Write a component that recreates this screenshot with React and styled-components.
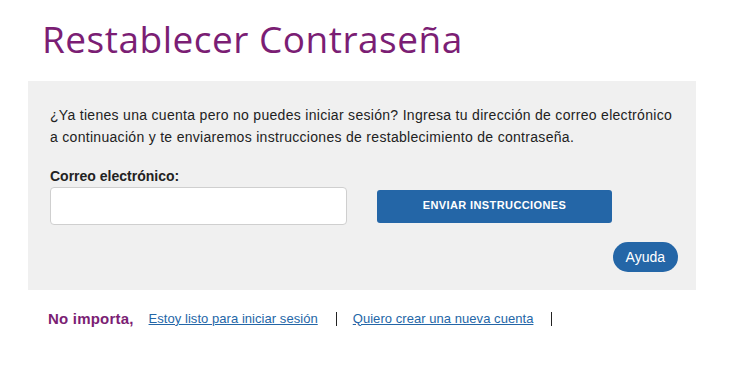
import React from 'react';
import styled, { createGlobalStyle } from 'styled-components';

const colors = {
  purple: '#7b1e74',
  blue: '#2466a7',
  panel: '#f0f0f0',
  text: '#222222',
};

const GlobalStyle = createGlobalStyle`
  body {
    margin: 0;
    background: #ffffff;
    font-family: 'Liberation Sans', Arial, sans-serif;
  }
`;

const Page = styled.div`
  width: 735px;
  padding: 13px 0 0 28px;
  box-sizing: border-box;
`;

const Title = styled.h1`
  margin: 0 0 16px 14px;
  font-family: 'Open Sans', 'Liberation Sans', sans-serif;
  font-weight: 400;
  font-size: 37px;
  line-height: 52px;
  letter-spacing: 0.5px;
  color: ${colors.purple};
`;

const Panel = styled.div`
  width: 668px;
  background: ${colors.panel};
  padding: 23px 18px 18px 22px;
  box-sizing: border-box;
`;

const Intro = styled.p`
  margin: 0 0 20px;
  font-size: 14px;
  line-height: 22px;
  letter-spacing: 0.3px;
  color: ${colors.text};
`;

const Label = styled.label`
  display: block;
  font-size: 14px;
  font-weight: 700;
  color: ${colors.text};
  margin-bottom: 3px;
`;

const FormRow = styled.div`
  display: flex;
  align-items: center;
  gap: 30px;
`;

const Input = styled.input`
  width: 297px;
  height: 38px;
  box-sizing: border-box;
  border: 1px solid #cfcfcf;
  border-radius: 4px;
  background: #ffffff;
  font-size: 14px;
  padding: 0 10px;
`;

const SubmitButton = styled.button`
  width: 235px;
  height: 33px;
  border: none;
  border-radius: 3px;
  background: ${colors.blue};
  color: #ffffff;
  font-family: 'Liberation Sans', Arial, sans-serif;
  font-size: 11px;
  font-weight: 700;
  text-transform: uppercase;
  letter-spacing: 0.4px;
  padding-bottom: 4px;
`;

const HelpRow = styled.div`
  display: flex;
  justify-content: flex-end;
  margin-top: 17px;
`;

const HelpButton = styled.button`
  height: 30px;
  padding: 0 13px;
  border: none;
  border-radius: 15px;
  background: ${colors.blue};
  color: #ffffff;
  font-family: 'Liberation Sans', Arial, sans-serif;
  font-size: 14px;
`;

const Footer = styled.div`
  display: flex;
  align-items: center;
  padding: 20px 0 0 20px;
  font-size: 13px;
`;

const Never = styled.span`
  font-size: 15px;
  font-weight: 700;
  color: ${colors.purple};
  letter-spacing: 0.2px;
  margin-right: 15px;
`;

const FooterLink = styled.a`
  color: ${colors.blue};
  text-decoration: underline;
  letter-spacing: 0.05px;
  padding-right: 18px;
  margin-right: 16px;
  border-right: 1px solid #222;
  line-height: 14px;
  cursor: pointer;
`;

export default function App() {
  return (
    <>
      <GlobalStyle />
      <Page>
        <Title>Restablecer Contraseña</Title>
        <Panel>
          <Intro>
            ¿Ya tienes una cuenta pero no puedes iniciar sesión? Ingresa tu dirección de correo electrónico
            a continuación y te enviaremos instrucciones de restablecimiento de contraseña.
          </Intro>
          <Label htmlFor="email">Correo electrónico:</Label>
          <FormRow>
            <Input id="email" type="email" />
            <SubmitButton>Enviar instrucciones</SubmitButton>
          </FormRow>
          <HelpRow>
            <HelpButton>Ayuda</HelpButton>
          </HelpRow>
        </Panel>
        <Footer>
          <Never>No importa,</Never>
          <FooterLink>Estoy listo para iniciar sesión</FooterLink>
          <FooterLink>Quiero crear una nueva cuenta</FooterLink>
        </Footer>
      </Page>
    </>
  );
}
